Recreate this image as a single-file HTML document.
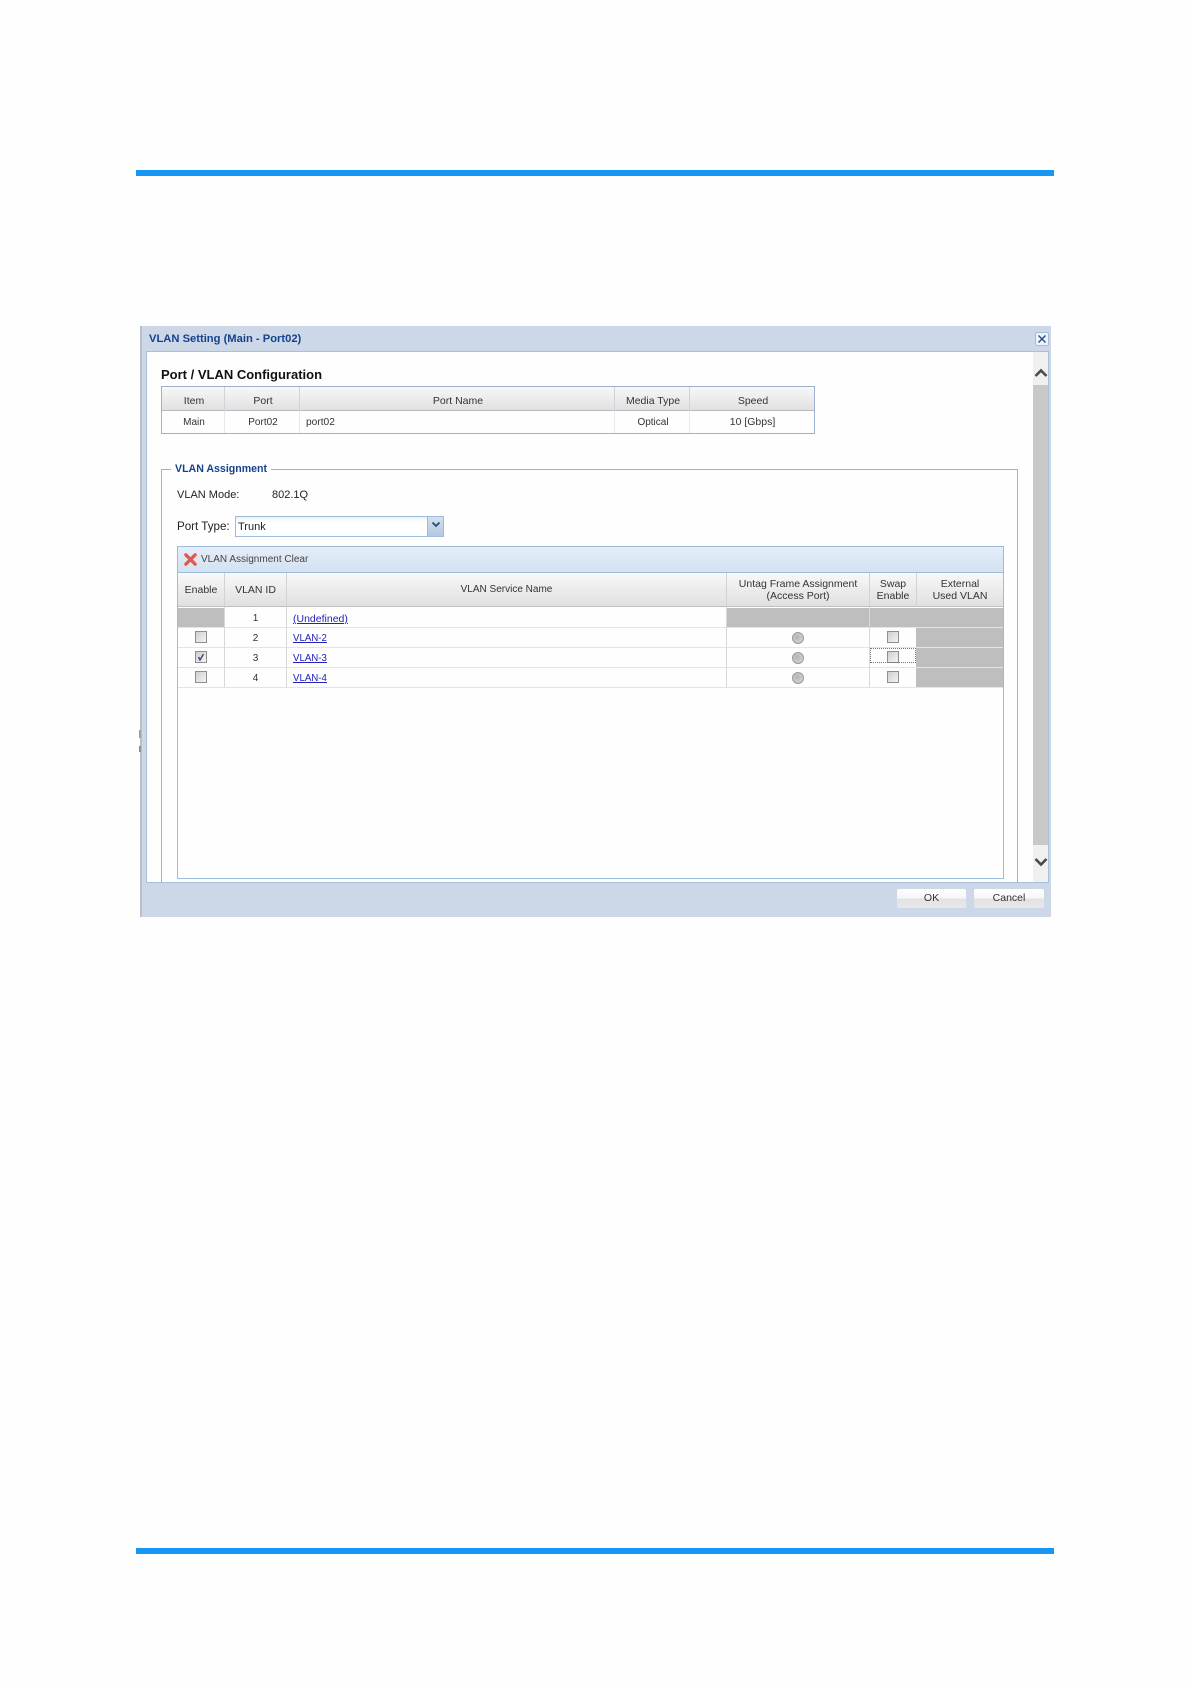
<!DOCTYPE html>
<html lang="en">
<head>
<meta charset="utf-8">
<title>VLAN Setting</title>
<style>
html,body{margin:0;padding:0;background:#fefefe}
#p{position:relative;width:1190px;height:1684px;overflow:hidden;background:#fefefe;font-family:"Liberation Sans",Arial,sans-serif;font-size:10.5px;color:#333}
#p div,#p a,#p svg{position:absolute;display:block}
#d{left:0;top:0;width:1190px;height:1684px;filter:blur(.35px)}
.t{white-space:nowrap;line-height:14px;height:14px}
.c{text-align:center}
.hd{background:linear-gradient(#f8f8f8,#e0e0e0)}
.vl{width:1px;background:#cfd3d8}
.vl2{width:1px;background:#e6e8ea}
.rl{width:1px;background:#d8d8d8}
.hl{height:1px;background:#e4e4e4}
.g{background:#bebebe}
.cb{width:10px;height:10px;border:1px solid #8e8e8e;background:linear-gradient(135deg,#cfcfcf,#f4f4f4)}
.r{width:10px;height:10px;border:1px solid #999;border-radius:50%;background:radial-gradient(circle at 40% 40%,#b4b4b4 0,#cfcfcf 70%,#eee 100%)}
#p a{color:#2222bb;text-decoration:underline}
.btn{background:linear-gradient(#fdfdfd 0,#f8f8f8 45%,#e2e2e2 55%,#e8e8e8 100%);border-radius:2px;text-align:center;line-height:19px;height:19px;color:#333}
</style>
</head>
<body>
<div id="p">
<div style="left:136px;top:170px;width:918px;height:6px;background:#1797f5"></div>
<div style="left:136px;top:1548px;width:918px;height:6px;background:#1797f5"></div>
<div id="d">

<!-- window -->
<div style="left:140px;top:326px;width:911px;height:591px;background:#ccd8e7"></div>
<div style="left:140px;top:326px;width:2px;height:591px;background:#bcc0c6"></div>
<div style="left:139px;top:730px;width:2px;height:8px;background:#a0a0a0"></div>
<div style="left:139px;top:746px;width:2px;height:6px;background:#909090"></div>
<div class="t" style="left:149px;top:332px;font-weight:bold;font-size:11.2px;color:#15428b">VLAN Setting (Main - Port02)</div>
<div style="left:1035px;top:332px;width:12px;height:12px;border:1px solid #a3bcd9;background:#eef3f9;border-radius:2px"></div>
<svg style="left:1036px;top:333px" width="12" height="12" viewBox="0 0 12 12"><path d="M2.5 2.5L9.5 9.5M9.5 2.5L2.5 9.5" stroke="#2a4a86" stroke-width="1.4" fill="none"/></svg>

<!-- body -->
<div style="left:146px;top:351px;width:903px;height:532px;background:#fefefe;border:1px solid #a9c0da;box-sizing:border-box"></div>

<!-- scrollbar -->
<div style="left:1033px;top:352px;width:15px;height:530px;background:#f0f0f0"></div>
<div style="left:1033px;top:385px;width:15px;height:460px;background:#c8c8c8"></div>
<svg style="left:1034px;top:367px" width="14" height="12" viewBox="0 0 14 12"><path d="M1.5 9L7 3.5L12.5 9" stroke="#4a4a4a" stroke-width="2.6" fill="none"/></svg>
<svg style="left:1034px;top:856px" width="14" height="12" viewBox="0 0 14 12"><path d="M1.5 3L7 8.5L12.5 3" stroke="#4a4a4a" stroke-width="2.6" fill="none"/></svg>

<!-- heading -->
<div class="t" style="left:161px;top:368px;font-weight:bold;font-size:13px;color:#111">Port / VLAN Configuration</div>

<!-- table 1 -->
<div style="left:162px;top:387px;width:652px;height:24px" class="hd"></div>
<div style="left:161px;top:386px;width:654px;height:48px;border:1px solid #9db2cf;box-sizing:border-box"></div>
<div style="left:162px;top:410px;width:652px;height:1px;background:#b8bcc2"></div>
<div class="vl" style="left:224px;top:387px;height:24px"></div>
<div class="vl" style="left:299px;top:387px;height:24px"></div>
<div class="vl" style="left:614px;top:387px;height:24px"></div>
<div class="vl" style="left:689px;top:387px;height:24px"></div>
<div class="vl2" style="left:224px;top:411px;height:22px"></div>
<div class="vl2" style="left:299px;top:411px;height:22px"></div>
<div class="vl2" style="left:614px;top:411px;height:22px"></div>
<div class="vl2" style="left:689px;top:411px;height:22px"></div>
<div class="t c" style="left:163px;top:394px;width:62px">Item</div>
<div class="t c" style="left:225px;top:394px;width:76px">Port</div>
<div class="t c" style="left:301px;top:394px;width:314px">Port Name</div>
<div class="t c" style="left:616px;top:394px;width:74px">Media Type</div>
<div class="t c" style="left:690px;top:394px;width:126px">Speed</div>
<div class="t c" style="left:163px;top:416px;width:62px;font-size:10px">Main</div>
<div class="t c" style="left:225px;top:416px;width:76px;font-size:10px">Port02</div>
<div class="t" style="left:306px;top:416px;font-size:10.2px">port02</div>
<div class="t c" style="left:616px;top:416px;width:74px;font-size:10px">Optical</div>
<div class="t c" style="left:690px;top:415px;width:125px;font-size:10.5px">10 [Gbps]</div>

<!-- fieldset -->
<div style="left:161px;top:469px;width:857px;height:414px;border:1px solid #b0b0b0;border-bottom:0;box-sizing:border-box"></div>
<div class="t" style="left:171px;top:462px;padding:0 4px;background:#fefefe;font-weight:bold;font-size:10.6px;color:#15428b">VLAN Assignment</div>
<div class="t" style="left:177px;top:488px;font-size:11px;color:#222">VLAN Mode:</div>
<div class="t" style="left:272px;top:488px;font-size:11px;color:#222">802.1Q</div>
<div class="t" style="left:177px;top:520px;font-size:11.6px;color:#222">Port Type:</div>
<div style="left:235px;top:516px;width:209px;height:21px;border:1px solid #9dbcdc;box-sizing:border-box;background:linear-gradient(#eef1f5,#fff 30%)"></div>
<div class="t" style="left:238px;top:520px;font-size:11px;color:#222">Trunk</div>
<div style="left:427px;top:517px;width:16px;height:19px;background:linear-gradient(#d4e1f0,#b3c8e0);border-left:1px solid #9dbcdc;box-sizing:border-box"></div>
<svg style="left:431px;top:521px" width="10" height="8" viewBox="0 0 10 8"><path d="M1.5 1.5L5 5L8.5 1.5" stroke="#2a4a76" stroke-width="1.8" fill="none"/></svg>

<!-- grid panel -->
<div style="left:177px;top:546px;width:827px;height:333px;border:1px solid #9dbcdc;box-sizing:border-box;background:#fefefe"></div>
<div style="left:178px;top:547px;width:825px;height:26px;background:linear-gradient(#e6eef8,#d3e1f1);border-bottom:1px solid #9dbcdc;box-sizing:border-box"></div>
<svg style="left:183px;top:552px" width="15" height="15" viewBox="0 0 16 16"><path d="M3 3L13 13M13 3L3 13" stroke="#e8564a" stroke-width="3.4" fill="none" stroke-linecap="round"/></svg>
<div class="t" style="left:201px;top:553px;font-size:10px;color:#444">VLAN Assignment Clear</div>

<!-- grid header -->
<div class="hd" style="left:178px;top:573px;width:825px;height:33px"></div>
<div style="left:178px;top:606px;width:825px;height:1px;background:#c0c0c0"></div>
<div class="vl" style="left:224px;top:573px;height:34px"></div>
<div class="vl" style="left:286px;top:573px;height:34px"></div>
<div class="vl" style="left:726px;top:573px;height:34px"></div>
<div class="vl" style="left:869px;top:573px;height:34px"></div>
<div class="vl" style="left:916px;top:573px;height:34px"></div>
<div class="t c" style="left:178px;top:583px;width:46px">Enable</div>
<div class="t c" style="left:225px;top:583px;width:61px">VLAN ID</div>
<div class="t c" style="left:287px;top:583px;width:439px;font-size:10px">VLAN Service Name</div>
<div class="t c" style="left:727px;top:577px;width:142px">Untag Frame Assignment</div>
<div class="t c" style="left:727px;top:589px;width:142px">(Access Port)</div>
<div class="t c" style="left:870px;top:577px;width:46px">Swap</div>
<div class="t c" style="left:870px;top:589px;width:46px">Enable</div>
<div class="t c" style="left:917px;top:577px;width:86px">External</div>
<div class="t c" style="left:917px;top:589px;width:86px">Used VLAN</div>

<!-- grid rows -->
<div class="g" style="left:178px;top:608px;width:46px;height:19px"></div>
<div class="g" style="left:726px;top:608px;width:277px;height:19px"></div>
<div class="g" style="left:916px;top:628px;width:87px;height:19px"></div>
<div class="g" style="left:916px;top:648px;width:87px;height:19px"></div>
<div class="g" style="left:916px;top:668px;width:87px;height:19px"></div>
<div class="hl" style="left:178px;top:627px;width:825px"></div>
<div class="hl" style="left:178px;top:647px;width:825px"></div>
<div class="hl" style="left:178px;top:667px;width:825px"></div>
<div class="hl" style="left:178px;top:687px;width:825px"></div>
<div class="rl" style="left:224px;top:607px;height:80px"></div>
<div class="rl" style="left:286px;top:607px;height:80px"></div>
<div class="rl" style="left:726px;top:607px;height:80px"></div>
<div class="rl" style="left:869px;top:607px;height:80px"></div>

<div class="t c" style="left:225px;top:612px;width:61px;font-size:10px">1</div>
<div class="t c" style="left:225px;top:632px;width:61px;font-size:10px">2</div>
<div class="t c" style="left:225px;top:652px;width:61px;font-size:10px">3</div>
<div class="t c" style="left:225px;top:672px;width:61px;font-size:10px">4</div>
<a class="t" href="#" style="left:293px;top:612px;font-size:10.5px">(Undefined)</a>
<a class="t" href="#" style="left:293px;top:632px;font-size:9.7px">VLAN-2</a>
<a class="t" href="#" style="left:293px;top:652px;font-size:9.7px">VLAN-3</a>
<a class="t" href="#" style="left:293px;top:672px;font-size:9.7px">VLAN-4</a>

<div class="cb" style="left:195px;top:631px"></div>
<div class="cb" style="left:195px;top:651px"></div>
<svg style="left:195px;top:651px" width="12" height="12" viewBox="0 0 12 12"><path d="M3.5 6L5 9L8.5 3" stroke="#44447a" stroke-width="1.4" fill="none"/></svg>
<div class="cb" style="left:195px;top:671px"></div>

<div class="r" style="left:792px;top:632px"></div>
<div class="r" style="left:792px;top:652px"></div>
<div class="r" style="left:792px;top:672px"></div>

<div class="cb" style="left:887px;top:631px"></div>
<div class="cb" style="left:887px;top:651px"></div>
<div class="cb" style="left:887px;top:671px"></div>
<div style="left:870px;top:648px;width:46px;height:15px;border:1px dotted #777;box-sizing:border-box"></div>

<!-- buttons -->
<div class="btn" style="left:897px;top:889px;width:69px">OK</div>
<div class="btn" style="left:974px;top:889px;width:70px">Cancel</div>
</div>
</div>
</body>
</html>
